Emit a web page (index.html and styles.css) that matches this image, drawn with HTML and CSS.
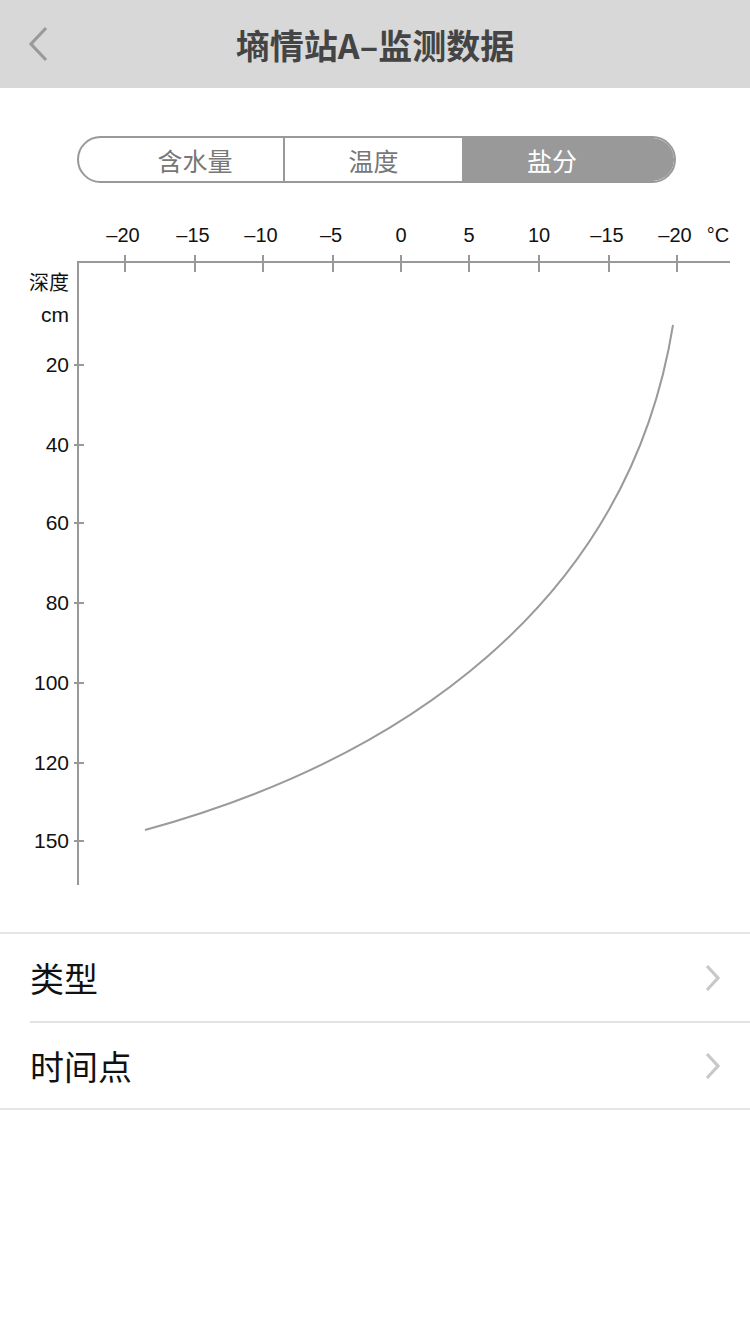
FILE: index.html
```html
<!DOCTYPE html>
<html lang="zh-CN">
<head>
<meta charset="utf-8">
<title>墒情站A–监测数据</title>
<link rel="stylesheet" href="styles.css">
</head>
<body>
<header class="nav">
  <svg class="back" width="24" height="36" viewBox="0 0 24 36"><path d="M20 2 L5 18 L20 34" fill="none" stroke="#9a9a9a" stroke-width="3.2"/></svg>
  <h1 class="title">墒情站A–监测数据</h1>
</header>

<div class="seg-wrap">
  <div class="seg">
    <div class="seg-item first">含水量</div>
    <div class="seg-item">温度</div>
    <div class="seg-item last active">盐分</div>
  </div>
</div>

<svg class="chart" width="750" height="749" viewBox="0 183 750 749">
  <g class="xlabels">
    <text x="123" y="242">–20</text>
    <text x="193" y="242">–15</text>
    <text x="261" y="242">–10</text>
    <text x="331" y="242">–5</text>
    <text x="401" y="242">0</text>
    <text x="469" y="242">5</text>
    <text x="539" y="242">10</text>
    <text x="607" y="242">–15</text>
    <text x="675" y="242">–20</text>
    <text x="718" y="242">°C</text>
  </g>
  <g class="ylabels">
    <text x="69" y="290" class="unit">深度</text>
    <text x="69" y="322">cm</text>
    <text x="69" y="372">20</text>
    <text x="69" y="452">40</text>
    <text x="69" y="530">60</text>
    <text x="69" y="610">80</text>
    <text x="69" y="690">100</text>
    <text x="69" y="770">120</text>
    <text x="69" y="848">150</text>
  </g>
  <g class="axis">
    <line x1="77" y1="262" x2="730" y2="262"/>
    <line x1="78" y1="261" x2="78" y2="885"/>
    <line x1="125" y1="255" x2="125" y2="272"/>
    <line x1="195" y1="255" x2="195" y2="272"/>
    <line x1="263" y1="255" x2="263" y2="272"/>
    <line x1="333" y1="255" x2="333" y2="272"/>
    <line x1="401" y1="255" x2="401" y2="272"/>
    <line x1="469" y1="255" x2="469" y2="272"/>
    <line x1="539" y1="255" x2="539" y2="272"/>
    <line x1="609" y1="255" x2="609" y2="272"/>
    <line x1="677" y1="255" x2="677" y2="272"/>
    <line x1="74" y1="365" x2="84" y2="365"/>
    <line x1="74" y1="445" x2="84" y2="445"/>
    <line x1="74" y1="523" x2="84" y2="523"/>
    <line x1="74" y1="603" x2="84" y2="603"/>
    <line x1="74" y1="683" x2="84" y2="683"/>
    <line x1="74" y1="763" x2="84" y2="763"/>
    <line x1="74" y1="841" x2="84" y2="841"/>
  </g>
  <path class="curve" d="M145 830 C 400 760, 628 605, 673 325"/>
</svg>

<ul class="list">
  <li class="row">
    <span class="label">类型</span>
    <svg class="chev" width="18" height="28" viewBox="0 0 18 28"><path d="M3 2 L14 14 L3 26" fill="none" stroke="#c8c8c8" stroke-width="3.2"/></svg>
  </li>
  <li class="row">
    <span class="label">时间点</span>
    <svg class="chev" width="18" height="28" viewBox="0 0 18 28"><path d="M3 2 L14 14 L3 26" fill="none" stroke="#c8c8c8" stroke-width="3.2"/></svg>
  </li>
</ul>
</body>
</html>
```

FILE: styles.css
```css
* { box-sizing: border-box; }
html, body {
  margin: 0;
  padding: 0;
  background: #fff;
  font-family: "Liberation Sans", "Noto Sans CJK SC", sans-serif;
}
.nav {
  height: 88px;
  background: #d8d8d8;
  display: flex;
  align-items: center;
  justify-content: center;
  position: relative;
}
.back {
  position: absolute;
  left: 26px;
  top: 26px;
}
.title {
  margin: 0;
  font-size: 34px;
  font-weight: 700;
  color: #444;
  font-family: "Noto Sans CJK SC", sans-serif;
  letter-spacing: 0;
}
.seg-wrap {
  padding: 48px 74px 0 77px;
}
.seg {
  height: 47px;
  border: 2px solid #999;
  border-radius: 24px;
  display: flex;
  overflow: hidden;
}
.seg-item {
  flex: 1 1 0;
  display: flex;
  align-items: center;
  justify-content: center;
  font-family: "Noto Sans CJK SC", sans-serif;
  font-size: 25px;
  color: #777;
}
.seg-item.first {
  flex: 0 0 206px;
  padding-left: 28px;
  border-right: 2px solid #999;
}
.seg-item.last {
  flex: 0 0 212px;
  padding-right: 32px;
}
.seg-item.active {
  background: #999;
  color: #fff;
}
.chart {
  display: block;
}
.chart text {
  font-family: "Liberation Sans", "Noto Sans CJK SC", sans-serif;
  font-size: 20px;
  fill: #111;
}
.xlabels text { text-anchor: middle; }
.ylabels text { text-anchor: end; font-size: 21px; }
.ylabels .unit { font-family: "Noto Sans CJK SC", sans-serif; font-size: 20px; }
.axis line {
  stroke: #999;
  stroke-width: 2;
}
.curve {
  fill: none;
  stroke: #9a9a9a;
  stroke-width: 2;
}
.list {
  list-style: none;
  margin: 0;
  padding: 0;
  border-top: 2px solid #e6e6e6;
  border-bottom: 2px solid #e6e6e6;
}
.row {
  height: 87px;
  margin-left: 30px;
  padding-right: 28px;
  display: flex;
  align-items: center;
  justify-content: space-between;
}
.row + .row {
  border-top: 2px solid #e2e2e2;
}
.label {
  font-family: "Noto Sans CJK SC", sans-serif;
  font-size: 34px;
  color: #111;
}
```
